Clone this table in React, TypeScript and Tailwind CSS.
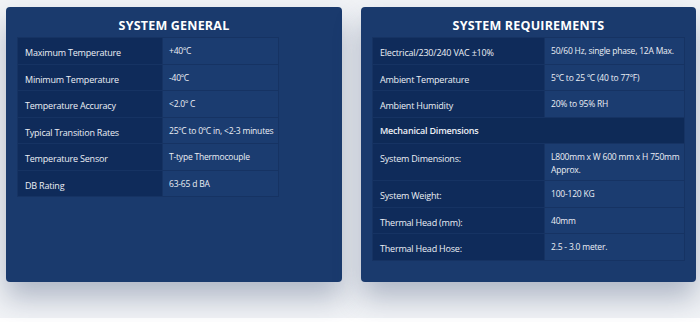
import React from "react";

type Row = { l: string; v?: React.ReactNode; full?: boolean };

const general: Row[] = [
  { l: "Maximum Temperature", v: "+40ºC" },
  { l: "Minimum Temperature", v: "-40ºC" },
  { l: "Temperature Accuracy", v: "<2.0º C" },
  { l: "Typical Transition Rates", v: "25ºC to 0ºC in, <2-3 minutes" },
  { l: "Temperature Sensor", v: "T-type Thermocouple" },
  { l: "DB Rating", v: "63-65 d BA" },
];

const reqs: Row[] = [
  { l: "Electrical/230/240 VAC ±10%", v: "50/60 Hz, single phase, 12A Max." },
  { l: "Ambient Temperature", v: "5ºC to 25 ºC (40 to 77ºF)" },
  { l: "Ambient Humidity", v: "20% to 95% RH" },
  { l: "Mechanical Dimensions", full: true },
  {
    l: "System Dimensions:",
    v: (
      <>
        L800mm x W 600 mm x H 750mm
        <br />
        Approx.
      </>
    ),
  },
  { l: "System Weight:", v: "100-120 KG" },
  { l: "Thermal Head (mm):", v: "40mm" },
  { l: "Thermal Head Hose:", v: "2.5 - 3.0 meter." },
];

function Table({ rows, tableW, labelW }: { rows: Row[]; tableW: string; labelW: string }) {
  return (
    <table
      className={`${tableW} table-fixed border-collapse text-[9px] leading-[13px] tracking-[-0.2px] text-[#eceff5]`}
      style={{ fontFamily: '"Open Sans", sans-serif' }}
    >
      <colgroup>
        <col className={labelW} />
        <col />
      </colgroup>
      <tbody>
        {rows.map((r, i) =>
          r.full ? (
            <tr key={i}>
              <td colSpan={2} className="h-[26px] border border-[#163363] bg-[#0e2a57] pl-[7px] pr-[6px] pt-[1px] align-middle font-semibold">
                {r.l}
              </td>
            </tr>
          ) : (
            <tr key={i}>
              <td className="border border-[#163363] bg-[#0f2b5a] pl-[7px] pr-[6px] pt-[8px] pb-[4.5px] align-top whitespace-nowrap">
                {r.l}
              </td>
              <td className="border border-[#163363] bg-[#1b3c70] pl-[6px] pr-[2px] pt-[6px] pb-[4.5px] align-top whitespace-nowrap text-[8.5px]">
                {r.v}
              </td>
            </tr>
          )
        )}
      </tbody>
    </table>
  );
}

function Card({ title, children }: { title: string; children: React.ReactNode }) {
  return (
    <div className="h-[275px] rounded-[4px] bg-[#1a3a6d] px-[11px] shadow-[0_16px_28px_rgba(40,60,100,0.32)]">
      <div
        className="flex h-[30px] items-end justify-center pb-[1px] text-[12.5px] font-bold tracking-[0.2px] text-white"
        style={{ fontFamily: '"Open Sans", sans-serif' }}
      >
        {title}
      </div>
      {children}
    </div>
  );
}

export default function App() {
  return (
    <div className="h-[322px] w-[700px] bg-[#f1f3f6]">
      <div className="flex h-[318px] gap-[19px] pl-[6px] pr-[4px] pt-[7px]">
        <div className="w-[336px]">
          <Card title="SYSTEM GENERAL">
            <Table rows={general} tableW="w-[262px]" labelW="w-[145px]" />
          </Card>
        </div>
        <div className="w-[335px]">
          <Card title="SYSTEM REQUIREMENTS">
            <Table rows={reqs} tableW="w-[313px]" labelW="w-[172px]" />
          </Card>
        </div>
      </div>
      <div className="h-[4px] bg-white" />
    </div>
  );
}
